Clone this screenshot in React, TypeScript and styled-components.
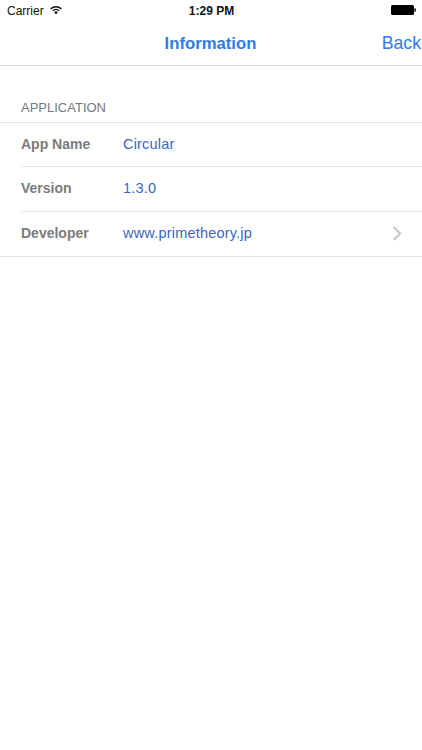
import styled, { createGlobalStyle } from 'styled-components';

const GlobalStyle = createGlobalStyle`
    html, body {
        margin: 0;
        padding: 0;
        background: #ffffff;
    }
    * {
        box-sizing: border-box;
    }
`;

const Screen = styled.div`
    width: 422px;
    height: 750px;
    overflow: hidden;
    background: #ffffff;
    font-family: 'Liberation Sans', Arial, sans-serif;
`;

const StatusBar = styled.div`
    display: grid;
    grid-template-columns: 1fr auto 1fr;
    align-items: center;
    height: 22px;
    padding: 0 6px 0 7px;
    font-size: 12px;
    color: #111111;
`;

const StatusLeft = styled.div`
    display: flex;
    align-items: center;
    gap: 6px;
    svg {
        margin-bottom: 2px;
    }
`;

const Clock = styled.div`
    font-weight: bold;
`;

const BatteryWrap = styled.div`
    display: flex;
    justify-content: flex-end;
    padding-bottom: 2px;
`;

const NavBar = styled.div`
    display: grid;
    grid-template-columns: 1fr auto 1fr;
    align-items: center;
    height: 44px;
    padding: 0 1px 0 0;
    border-bottom: 1px solid #dcdcdc;
    color: #2f7be8;
`;

const NavTitle = styled.div`
    grid-column: 2;
    font-size: 16.7px;
    font-weight: bold;
`;

const NavBack = styled.div`
    grid-column: 3;
    text-align: right;
    font-size: 17.7px;
`;

const SectionHeader = styled.div`
    height: 57px;
    padding: 34px 21px 0;
    font-size: 13px;
    line-height: 16px;
    color: #777777;
    border-bottom: 1px solid #e2e2e2;
`;

const RowList = styled.div`
    display: grid;
    grid-template-rows: 44px 45px 45px;
`;

const Row = styled.div<{ $last?: boolean }>`
    display: flex;
    align-items: center;
    margin-left: ${(p) => (p.$last ? 0 : 21)}px;
    padding-left: ${(p) => (p.$last ? 21 : 0)}px;
    padding-right: 20px;
    padding-bottom: 2px;
    border-bottom: 1px solid #e4e4e4;
`;

const RowLabel = styled.div`
    width: 102px;
    font-size: 14px;
    font-weight: bold;
    color: #7b7b7b;
`;

const RowValue = styled.div`
    flex: 1;
    font-size: 14.5px;
    letter-spacing: 0.2px;
    color: #3a66bd;
`;

const rows = [
    { label: 'App Name', value: 'Circular' },
    { label: 'Version', value: '1.3.0' },
    { label: 'Developer', value: 'www.primetheory.jp', link: true },
];

function WifiIcon() {
    return (
        <svg width="12" height="10" viewBox="0 0 14 11">
            <path d="M0.3 3.6 A9.5 9.5 0 0 1 13.7 3.6 L12.5 4.8 A7.8 7.8 0 0 0 1.5 4.8 Z" fill="#111" />
            <path d="M2.6 5.9 A6.3 6.3 0 0 1 11.4 5.9 L10.2 7.1 A4.6 4.6 0 0 0 3.8 7.1 Z" fill="#111" />
            <path d="M4.9 8.1 A3 3 0 0 1 9.1 8.1 L7 10.4 Z" fill="#111" />
        </svg>
    );
}

function BatteryIcon() {
    return (
        <svg width="25" height="10" viewBox="0 0 25 10">
            <rect x="0" y="0" width="23" height="10" rx="1.5" fill="#000" />
            <rect x="23.4" y="3.2" width="1.4" height="3.6" rx="0.6" fill="#000" />
        </svg>
    );
}

function Chevron() {
    return (
        <svg width="10" height="15" viewBox="0 0 10 15">
            <path d="M1.5 1 L8.2 7.5 L1.5 14" fill="none" stroke="#c5c5ca" strokeWidth="2" />
        </svg>
    );
}

export default function App() {
    return (
        <Screen>
            <GlobalStyle />
            <StatusBar>
                <StatusLeft>
                    <span>Carrier</span>
                    <WifiIcon />
                </StatusLeft>
                <Clock>1:29 PM</Clock>
                <BatteryWrap>
                    <BatteryIcon />
                </BatteryWrap>
            </StatusBar>
            <NavBar>
                <NavTitle>Information</NavTitle>
                <NavBack>Back</NavBack>
            </NavBar>
            <SectionHeader>APPLICATION</SectionHeader>
            <RowList>
                {rows.map((row) => (
                    <Row key={row.label} $last={row.link}>
                        <RowLabel>{row.label}</RowLabel>
                        <RowValue>{row.value}</RowValue>
                        {row.link && <Chevron />}
                    </Row>
                ))}
            </RowList>
        </Screen>
    );
}
